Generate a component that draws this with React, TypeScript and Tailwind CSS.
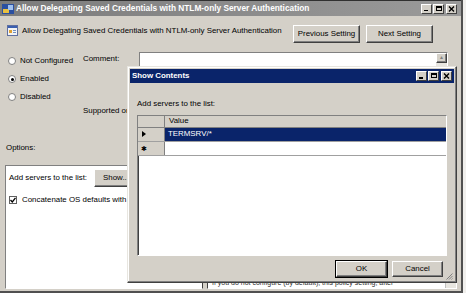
import React from 'react';

const font = { fontFamily: '"Liberation Sans", Arial, sans-serif' };

function CaptionButtons() {
    const btn =
        'w-[11px] h-[10px] bg-[#d4d0c8] border border-t-white border-l-white border-r-[#404040] border-b-[#404040] flex items-center justify-center text-black';
    return (
        <div className="flex items-center gap-[1px]">
            <div className={btn}>
                <div className="w-[4px] h-[1.5px] bg-black mt-[4px] -ml-[1px]" />
            </div>
            <div className={btn}>
                <div className="w-[6px] h-[5px] border border-black border-t-2" />
            </div>
            <div className={`${btn} ml-[1px]`}>
                <svg width="7" height="6" viewBox="0 0 7 6">
                    <path d="M1 0.5 L6 5.5 M6 0.5 L1 5.5" stroke="#000" strokeWidth="1.4" />
                </svg>
            </div>
        </div>
    );
}

function Radio({ checked, label }: { checked?: boolean; label: string }) {
    return (
        <div className="flex items-center gap-[4px] h-[10px]">
            <div className="w-[8px] h-[8px] rounded-full bg-white border border-[#808080] flex items-center justify-center">
                {checked && <div className="w-[3px] h-[3px] rounded-full bg-black" />}
            </div>
            <span>{label}</span>
        </div>
    );
}

function WinButton({ children, className }: { children: React.ReactNode; className?: string }) {
    return (
        <div
            className={`bg-[#d4d0c8] border border-t-white border-l-white border-r-[#404040] border-b-[#404040] flex items-center justify-center shadow-[inset_-1px_-1px_0_#808080] whitespace-nowrap ${className ?? ''}`}
        >
            {children}
        </div>
    );
}

export default function App() {
    return (
        <div className="relative w-[466px] h-[293px] overflow-hidden bg-[#d4d0c8] text-[7.9px] text-black" style={font}>
            <div className="flex h-full">
                {/* main policy window */}
                <div className="w-[463px] h-full flex flex-col border-r-2 border-b-2 border-[#505050]">
                    {/* title bar */}
                    <div className="h-[16px] flex items-center border-t border-[#303030] bg-gradient-to-r from-[#7c7c7c] to-[#9a9a9a] pl-[2px] pr-[4px]">
                        <svg width="12" height="10" viewBox="0 0 12 10" className="mr-[2px]">
                            <rect x="0" y="0" width="12" height="10" fill="#2a4fa0" />
                            <rect x="1" y="5" width="6" height="4" fill="#e8c040" />
                            <rect x="6" y="1" width="5" height="5" fill="#9fc0ef" />
                        </svg>
                        <span className="text-white font-bold whitespace-nowrap text-[8.3px]">
                            Allow Delegating Saved Credentials with NTLM-only Server Authentication
                        </span>
                        <div className="ml-auto">
                            <CaptionButtons />
                        </div>
                    </div>

                    {/* header row */}
                    <div className="flex items-start mt-[9px] pl-[7px] pr-[28px] h-[18px]">
                        <svg width="11" height="11" viewBox="0 0 11 11">
                            <rect x="0.5" y="0.5" width="10" height="10" fill="#f4f4f4" stroke="#6070a0" />
                            <rect x="1" y="1" width="9" height="2" fill="#3a5fb0" />
                            <rect x="2" y="5" width="3" height="3" fill="#e0a030" />
                            <rect x="6" y="5" width="3" height="1" fill="#7090c0" />
                            <rect x="6" y="7" width="3" height="1" fill="#7090c0" />
                        </svg>
                        <span className="ml-[4px] whitespace-nowrap">
                            Allow Delegating Saved Credentials with NTLM-only Server Authentication
                        </span>
                        <div className="ml-auto flex gap-[6px]">
                            <WinButton className="w-[67px] h-[18px]">Previous Setting</WinButton>
                            <WinButton className="w-[67px] h-[18px]">Next Setting</WinButton>
                        </div>
                    </div>

                    {/* state + comment */}
                    <div className="flex mt-[9px] h-[92px]">
                        <div className="w-[83px] pl-[8px] pt-[4px] flex flex-col gap-[8px]">
                            <Radio label="Not Configured" />
                            <Radio label="Enabled" checked />
                            <Radio label="Disabled" />
                        </div>
                        <div className="w-[56px] flex flex-col whitespace-nowrap">
                            <span className="mt-[1px]">Comment:</span>
                            <span className="mt-[40px]">Supported on:</span>
                        </div>
                        <div className="flex flex-col w-[309px]">
                            <div className="h-[46px] bg-white border border-t-[#808080] border-l-[#808080] border-r-white border-b-white flex justify-end">
                                <div className="w-[11px] h-full bg-[#e8e6e0] flex flex-col">
                                    <WinButton className="w-[11px] h-[10px] text-[5px] text-[#808080]">▲</WinButton>
                                </div>
                            </div>
                            <div className="mt-[6px] h-[24px] bg-[#d4d0c8] border border-t-[#808080] border-l-[#808080] border-r-white border-b-white" />
                        </div>
                    </div>

                    {/* options / help labels */}
                    <div className="flex h-[21px] items-end pb-[11px]">
                        <span className="ml-[6px]">Options:</span>
                        <span className="ml-[172px]">Help:</span>
                    </div>

                    {/* panels */}
                    <div className="flex flex-1 pl-[5px] pr-[4px] pb-[2px] gap-[4px]">
                        <div className="w-[198px] bg-white border border-t-[#808080] border-l-[#808080] border-r-[#404040] border-b-white pt-[3px] pl-[3px]">
                            <div className="flex items-center gap-[7px] h-[18px]">
                                <span className="whitespace-nowrap">Add servers to the list:</span>
                                <WinButton className="w-[42px] h-[18px] justify-start pl-[8px]">Show...</WinButton>
                            </div>
                            <div className="flex items-center gap-[5px] mt-[7px]">
                                <div className="w-[8px] h-[8px] bg-white border border-[#606060] flex items-center justify-center">
                                    <svg width="6" height="6" viewBox="0 0 6 6">
                                        <path d="M0.5 3 L2.3 5 L5.5 0.8" stroke="#000" strokeWidth="1.3" fill="none" />
                                    </svg>
                                </div>
                                <span className="whitespace-nowrap">Concatenate OS defaults with input above</span>
                            </div>
                        </div>
                        <div className="flex-1 bg-white border border-t-[#808080] border-l-[#404040] border-r-white border-b-white flex">
                            <div className="flex-1 flex flex-col justify-end pl-[4px] pb-[1px] text-[#303030] text-[7px] leading-[8px] whitespace-nowrap overflow-hidden">
                                <span>If you do not configure (by default), this policy setting, after</span>
                            </div>
                            <div className="w-[11px] bg-[#e8e6e0] border-l border-[#c0c0c0]" />
                        </div>
                    </div>
                </div>
                <div className="flex-1 bg-[#f0efec]" />
            </div>

            {/* Show Contents dialog */}
            <div className="absolute left-[127px] top-[66px] w-[330px] h-[217px] bg-[#d4d0c8] border border-t-[#e8e6e0] border-l-[#e8e6e0] border-r-[#404040] border-b-[#404040] shadow-[inset_-1px_-1px_0_#808080,inset_1px_1px_0_#fff] p-[2px] flex flex-col">
                <div className="h-[14px] bg-[#0a246a] flex items-center pl-[2px] pr-[2px]">
                    <span className="text-white font-bold">Show Contents</span>
                    <div className="ml-auto">
                        <CaptionButtons />
                    </div>
                </div>
                <div className="pl-[7px] mt-[15px]">Add servers to the list:</div>
                <div className="ml-[7px] mt-[5px] w-[310px] h-[143px] bg-white border border-t-[#808080] border-l-[#808080] border-r-white border-b-white shadow-[inset_1px_1px_0_#404040] flex flex-col">
                    <div className="flex h-[12px] border-b border-[#808080]">
                        <div className="w-[27px] bg-[#d4d0c8] border-r border-[#808080]" />
                        <div className="flex-1 bg-[#d4d0c8] pl-[4px] flex items-center">Value</div>
                    </div>
                    <div className="flex h-[14px] border-b border-[#a0a0a0]">
                        <div className="w-[27px] bg-[#d4d0c8] border-r border-[#808080] flex items-center pl-[4px]">
                            <svg width="4" height="6" viewBox="0 0 4 6">
                                <path d="M0 0 L4 3 L0 6 Z" fill="#000" />
                            </svg>
                        </div>
                        <div className="flex-1 bg-[#0a246a] text-white pl-[3px] flex items-center">TERMSRV/*</div>
                    </div>
                    <div className="flex h-[14px] border-b border-[#a0a0a0]">
                        <div className="w-[27px] bg-[#d4d0c8] border-r border-[#808080] flex items-center pl-[3px] text-[7px] leading-none">
                            ✱
                        </div>
                        <div className="flex-1 bg-white" />
                    </div>
                </div>
                <div className="flex justify-end gap-[5px] mt-[5px] pr-[11px]">
                    <WinButton className="w-[51px] h-[16px] outline outline-1 outline-black">OK</WinButton>
                    <WinButton className="w-[51px] h-[16px]">Cancel</WinButton>
                </div>
                <div className="flex justify-end mt-[-4px] pr-[1px]">
                    <svg width="7" height="7" viewBox="0 0 7 7">
                        <path d="M6.5 0.5 L0.5 6.5 M6.5 3 L3 6.5 M6.5 5.5 L5.5 6.5" stroke="#808080" strokeWidth="1" />
                    </svg>
                </div>
            </div>
        </div>
    );
}
